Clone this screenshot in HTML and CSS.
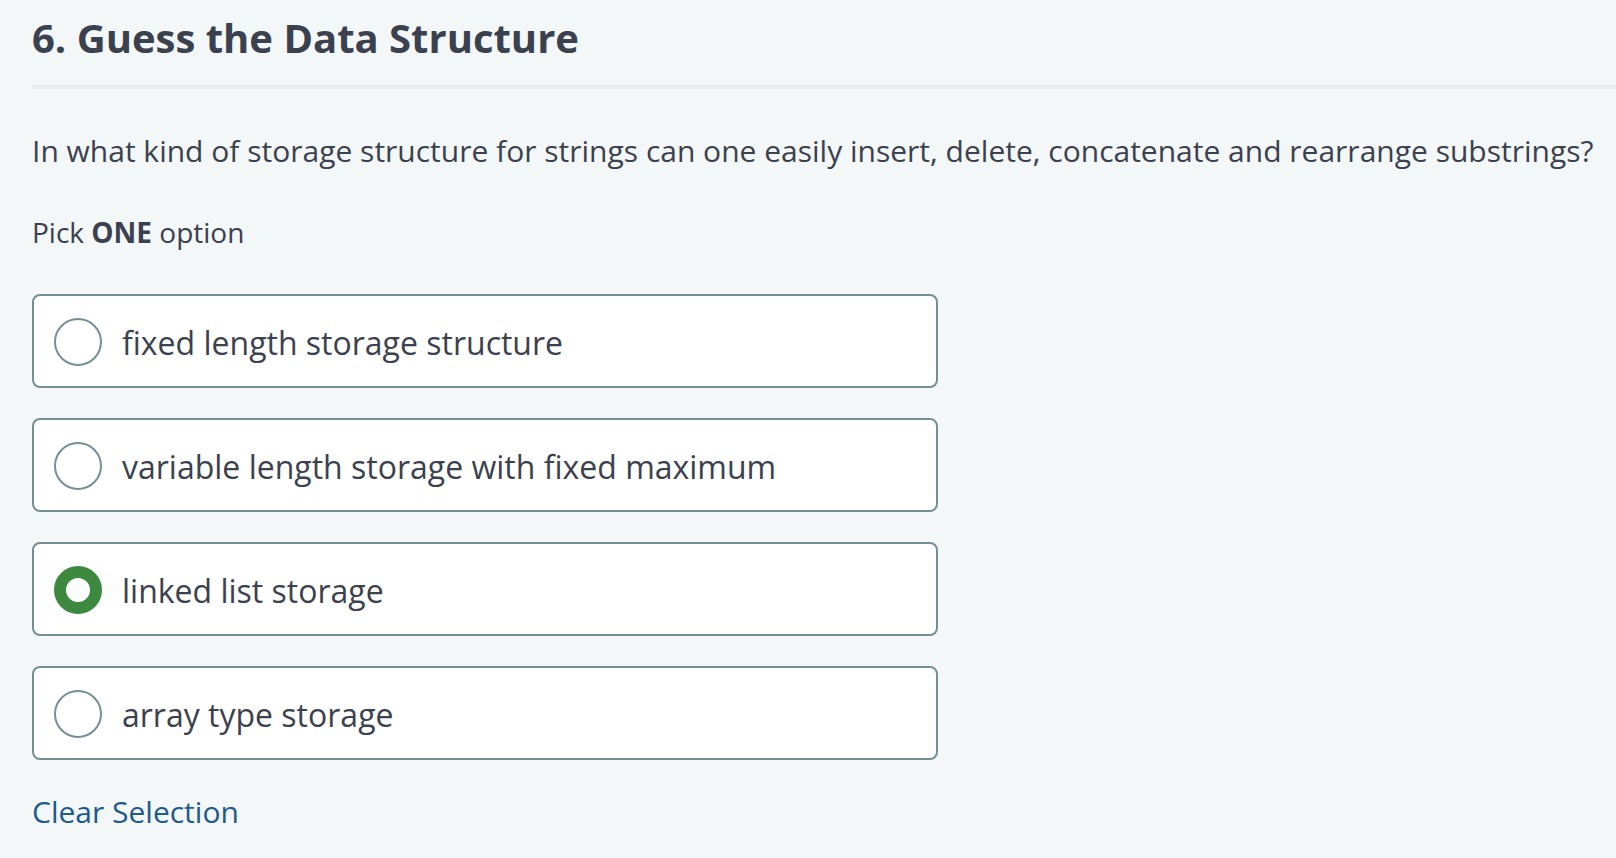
FILE: index.html
```html
<!DOCTYPE html>
<html lang="en">
<head>
<meta charset="utf-8">
<title>Guess the Data Structure</title>
<link rel="stylesheet" href="styles.css">
</head>
<body>
<main class="question">
  <h1 class="title">6. Guess the Data Structure</h1>
  <p class="prompt">In what kind of storage structure for strings can one easily insert, delete, concatenate and rearrange substrings?</p>
  <form class="answers">
    <p class="hint" id="hint">Pick <strong>ONE</strong> option</p>
    <div class="options" role="radiogroup" aria-labelledby="hint">
      <label class="option"><input class="radio" type="radio" name="answer"><span class="text">fixed length storage structure</span></label>
      <label class="option"><input class="radio" type="radio" name="answer"><span class="text">variable length storage with fixed maximum</span></label>
      <label class="option"><input class="radio" type="radio" name="answer" checked><span class="text">linked list storage</span></label>
      <label class="option"><input class="radio" type="radio" name="answer"><span class="text">array type storage</span></label>
    </div>
    <button class="clear" type="reset">Clear Selection</button>
  </form>
</main>
</body>
</html>
```
FILE: styles.css
```css
* {
  box-sizing: border-box;
}

body {
  margin: 0;
  background: #f3f7f8;
  color: #3b414e;
  font-family: "Open Sans", "Noto Sans", sans-serif;
}

.question {
  padding: 10px 0 24px 32px;
}

.title {
  margin: 0;
  padding-bottom: 19px;
  border-bottom: 4px solid #e8ecee;
  font-size: 40px;
  line-height: 56px;
  font-weight: 700;
}

.prompt {
  margin: 39px 0 0;
  font-size: 30px;
  line-height: 46px;
}

.hint {
  margin: 37px 0 0;
  font-size: 28px;
  line-height: 42px;
}

.options {
  display: grid;
  gap: 30px;
  width: 57.2%;
  min-width: 320px;
  margin-top: 41px;
}

.option {
  display: flex;
  align-items: center;
  gap: 20px;
  padding: 22px 20px 20px;
  border: 2px solid #768f94;
  border-radius: 8px;
  background: #fff;
  font-size: 32px;
  line-height: 46px;
}

.text {
  padding-top: 2px;
}

.radio {
  appearance: none;
  flex: none;
  width: 48px;
  height: 48px;
  margin: 0;
  border: 2px solid #768f94;
  border-radius: 50%;
  background: #fff;
}

.radio:checked {
  border: 12px solid #3d893f;
}

.clear {
  margin: 29px 0 0;
  padding: 0;
  border: 0;
  background: none;
  color: #225a8c;
  font: inherit;
  font-size: 30px;
  line-height: 46px;
  cursor: pointer;
}
```
